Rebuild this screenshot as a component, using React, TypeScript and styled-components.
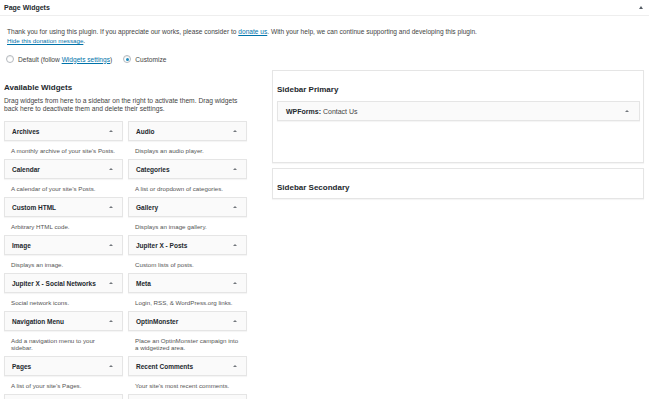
import styled, { createGlobalStyle } from 'styled-components';

const GlobalStyle = createGlobalStyle`
  html, body {
    margin: 0;
    padding: 0;
    background: #fff;
  }
  body {
    font-family: 'Liberation Sans', Arial, sans-serif;
    color: #444;
    -webkit-font-smoothing: antialiased;
  }
`;

const Panel = styled.div`
  width: 649px;
  height: 399px;
  overflow: hidden;
  background: #fff;
`;

const PanelHeader = styled.div`
  height: 15px;
  border-bottom: 1px solid #eee;
  display: flex;
  align-items: center;
  justify-content: space-between;
  padding: 0 6px 0 4px;
`;

const PanelTitle = styled.h2`
  margin: 0;
  font-size: 7px;
  line-height: 10px;
  font-weight: bold;
  color: #23282d;
`;

const Caret = styled.span<{ $size?: number; $color?: string }>`
  width: 0;
  height: 0;
  border-left: ${(p) => p.$size ?? 2}px solid transparent;
  border-right: ${(p) => p.$size ?? 2}px solid transparent;
  border-bottom: ${(p) => (p.$size ?? 2) + 0.5}px solid ${(p) => p.$color ?? '#72777c'};
`;

const PanelBody = styled.div`
  padding: 11px 5px 0 4px;
`;

const Notice = styled.p`
  margin: 0;
  padding-left: 3px;
  font-size: 6.6px;
  line-height: 9px;
  color: #444;
`;

const TextLink = styled.a<{ $size?: number }>`
  color: #0073aa;
  text-decoration: underline;
  ${(p) => (p.$size ? `font-size: ${p.$size}px;` : '')}
`;

const RadioRow = styled.div`
  margin-top: 9px;
  height: 10px;
  display: flex;
  align-items: center;
  padding-left: 2px;
  font-size: 6.6px;
  color: #444;
`;

const RadioLabel = styled.label`
  display: flex;
  align-items: center;
  gap: 4px;
  margin-right: 11px;
`;

const RadioDot = styled.span<{ $checked?: boolean }>`
  width: 6px;
  height: 6px;
  border-radius: 50%;
  border: 1px solid #b4b9be;
  background: #fff;
  box-shadow: inset 0 1px 1px rgba(0, 0, 0, 0.08);
  display: flex;
  align-items: center;
  justify-content: center;

  &::after {
    content: '';
    width: 3px;
    height: 3px;
    border-radius: 50%;
    background: ${(p) => (p.$checked ? '#1e8cbe' : 'transparent')};
  }
`;

const Columns = styled.div`
  margin-top: 6px;
  display: grid;
  grid-template-columns: 243px 372px;
  column-gap: 25px;
  align-items: start;
`;

const SectionTitle = styled.h3`
  margin: 12px 0 3px;
  font-size: 8px;
  line-height: 12px;
  font-weight: bold;
  color: #23282d;
`;

const SectionDesc = styled.p`
  margin: 0 0 8px;
  font-size: 6.7px;
  line-height: 8px;
  color: #444;
`;

const WidgetGrid = styled.div`
  display: grid;
  grid-template-columns: 119px 119px;
  column-gap: 5px;
`;

const WidgetItem = styled.div``;

const WidgetBar = styled.div<{ $inset?: number; $size?: number }>`
  height: 18px;
  display: flex;
  align-items: center;
  justify-content: space-between;
  padding: 0 ${(p) => p.$inset ?? 9}px 0 7px;
  background: #fafafa;
  border: 1px solid #e5e5e5;
  box-shadow: 0 1px 1px rgba(0, 0, 0, 0.04);
  font-size: ${(p) => p.$size ?? 6.5}px;
  color: #23282d;
`;

const WidgetName = styled.span`
  font-weight: bold;
`;

const WidgetDesc = styled.div`
  padding: 6px 7px 5px;
  font-size: 6.2px;
  line-height: 7px;
  color: #555;
  white-space: pre-line;
`;

const SidebarStack = styled.div`
  display: flex;
  flex-direction: column;
  gap: 5px;
`;

const SidebarBox = styled.div`
  background: #fff;
  border: 1px solid #e5e5e5;
  box-shadow: 0 1px 1px rgba(0, 0, 0, 0.04);
`;

const SidebarTitle = styled.h3`
  margin: 0;
  padding: 14px 4px 5px;
  font-size: 8px;
  line-height: 10px;
  font-weight: bold;
  color: #23282d;
`;

const SidebarList = styled.div`
  min-height: 61px;
  padding: 1px 3px 0 4px;
`;

const WidgetTitle = styled.span`
  font-weight: normal;
  color: #444;
  padding-left: 1px;

  b {
    color: #23282d;
  }
`;

const widgets = [
  { name: 'Archives', desc: 'A monthly archive of your site’s Posts.' },
  { name: 'Audio', desc: 'Displays an audio player.' },
  { name: 'Calendar', desc: 'A calendar of your site’s Posts.' },
  { name: 'Categories', desc: 'A list or dropdown of categories.' },
  { name: 'Custom HTML', desc: 'Arbitrary HTML code.' },
  { name: 'Gallery', desc: 'Displays an image gallery.' },
  { name: 'Image', desc: 'Displays an image.' },
  { name: 'Jupiter X - Posts', desc: 'Custom lists of posts.' },
  { name: 'Jupiter X - Social Networks', desc: 'Social network icons.' },
  { name: 'Meta', desc: 'Login, RSS, & WordPress.org links.' },
  { name: 'Navigation Menu', desc: 'Add a navigation menu to your\nsidebar.' },
  { name: 'OptinMonster', desc: 'Place an OptinMonster campaign into\na widgetized area.' },
  { name: 'Pages', desc: 'A list of your site’s Pages.' },
  { name: 'Recent Comments', desc: 'Your site’s most recent comments.' },
];

// the next row only peeks in at the bottom edge, its labels are below the fold
const peekRow = ['recent-posts', 'rss'];

export default function App() {
  return (
    <>
      <GlobalStyle />
      <Panel>
        <PanelHeader>
          <PanelTitle>Page Widgets</PanelTitle>
          <Caret $size={2.5} $color="#555d66" />
        </PanelHeader>
        <PanelBody>
          <Notice>
            Thank you for using this plugin. If you appreciate our works, please consider to{' '}
            <TextLink href="#">donate us</TextLink>. With your help, we can continue supporting and
            developing this plugin.
            <br />
            <TextLink href="#" $size={6.2}>
              Hide this donation message
            </TextLink>
            .
          </Notice>
          <RadioRow>
            <RadioLabel>
              <RadioDot />
              <span>
                Default (follow <TextLink href="#">Widgets settings</TextLink>)
              </span>
            </RadioLabel>
            <RadioLabel>
              <RadioDot $checked />
              <span>Customize</span>
            </RadioLabel>
          </RadioRow>
          <Columns>
            <div>
              <SectionTitle>Available Widgets</SectionTitle>
              <SectionDesc>
                Drag widgets from here to a sidebar on the right to activate them. Drag widgets
                <br />
                back here to deactivate them and delete their settings.
              </SectionDesc>
              <WidgetGrid>
                {widgets.map((w) => (
                  <WidgetItem key={w.name}>
                    <WidgetBar>
                      <WidgetName>{w.name}</WidgetName>
                      <Caret />
                    </WidgetBar>
                    <WidgetDesc>{w.desc}</WidgetDesc>
                  </WidgetItem>
                ))}
                {peekRow.map((id) => (
                  <WidgetItem key={id}>
                    <WidgetBar />
                  </WidgetItem>
                ))}
              </WidgetGrid>
            </div>
            <SidebarStack>
              <SidebarBox>
                <SidebarTitle>Sidebar Primary</SidebarTitle>
                <SidebarList>
                  <WidgetBar $inset={10} $size={7}>
                    <WidgetTitle>
                      <b>WPForms:</b> Contact Us
                    </WidgetTitle>
                    <Caret />
                  </WidgetBar>
                </SidebarList>
              </SidebarBox>
              <SidebarBox>
                <SidebarTitle>Sidebar Secondary</SidebarTitle>
              </SidebarBox>
            </SidebarStack>
          </Columns>
        </PanelBody>
      </Panel>
    </>
  );
}
